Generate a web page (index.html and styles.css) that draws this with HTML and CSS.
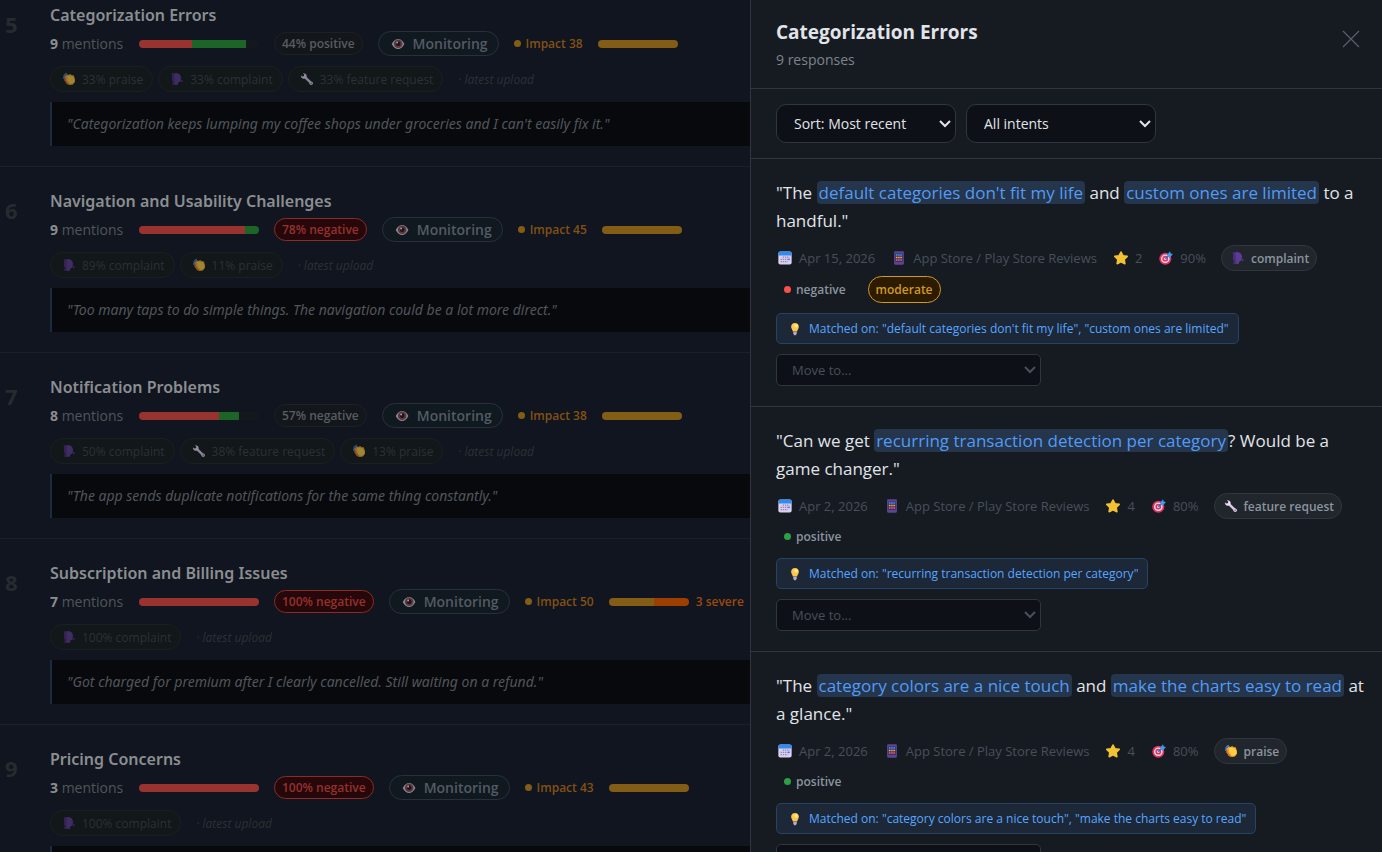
FILE: index.html
```
<!DOCTYPE html>
<html lang="en">
<head>
    <meta charset="UTF-8">
    <meta name="viewport" content="width=device-width, initial-scale=1.0">
    <title>Feedback Themes</title>
    <link rel="stylesheet" href="styles.css">
</head>
<body>
    <!-- Icon set -->
    <svg class="icon-defs" aria-hidden="true">
        <symbol id="i-clap" viewBox="0 0 16 16">
            <path d="M2.600 3.800L4.800 1.800M2 7L2.600 4.600" stroke="#2f7de0" stroke-width="1.800" stroke-linecap="round"/>
            <path d="M3 5.200l2.600-2.600 1.800.8 1.800-1 2.200 1.400 2-.1 1.400 4.100.1 3.200-2.400 3.200-3.400.7-3.400-1.300-2.700-4z" fill="#f0a030"/>
            <path d="M5.800 4.800l2-1.200 2 1.200 2.200-.2 2.200 3.800-.1 2.800-2.400 2.200-3-.4-2.500-3.100z" fill="#ffcf45"/>
            <path d="M3 5.200l-.1 4.600 2.800 3.800 3.200 1.200-3.300-4.200z" fill="#e5702c"/>
        </symbol>
        <symbol id="i-talk" viewBox="0 0 16 16">
            <path d="M2 2L8 1.200l3.400 1.600 1.200 3.400-.4 4.400-2.800 1.600-.6 2.600-6-.4.7-3.200-1.400-2 .6-2z" fill="#5d3a94"/>
            <path d="M2 2l3-.4.6 12.900-2.800-.1.7-3.200-1.400-2 .6-2z" fill="#472c78"/>
            <path d="M13 8.600l1.800 1.600-2 1.800z" fill="#5d3a94"/>
        </symbol>
        <symbol id="i-wrench" viewBox="0 0 16 16">
            <path d="M6 6.200l6.800 6.600" stroke="#d9cbe8" stroke-width="2.800" stroke-linecap="round"/>
            <path d="M3.400 1.400L5 3.200 4.200 4.800 2.400 5 1 3.600C.8 5.600 2.200 7.600 4.400 7.600 6.600 7.600 7.800 6 7.600 4.200 7.400 2.400 5.600 1 3.400 1.400z" fill="#e8ddf2"/>
            <circle cx="12.800" cy="12.800" r="2" fill="#d9cbe8"/>
            <circle cx="12.800" cy="12.800" r=".7" fill="#57506a"/>
        </symbol>
        <symbol id="i-eye" viewBox="0 0 16 16">
            <path d="M.8 8C3 4.200 5.400 2.400 8.200 2.400S13.400 4.200 15.300 8c-2 3.800-4.400 5.700-7.200 5.700S2.800 11.800.8 8z" fill="#dcd0e4"/>
            <circle cx="8.200" cy="7.800" r="4.900" fill="#8f4a4e"/>
            <circle cx="8.200" cy="7.800" r="2.600" fill="#2a1119"/>
            <circle cx="7" cy="6.200" r="1.100" fill="#fff"/>
        </symbol>
        <symbol id="i-cal" viewBox="0 0 16 16">
            <rect x=".4" y=".6" width="15.200" height="14.800" rx="2.200" fill="#dccff0"/>
            <path d="M.4 5V2.800Q.4.6 2.600.6h10.800Q15.600.6 15.600 2.800V5z" fill="#2e8cf0"/>
            <path d="M5.400 7h8M3 9.600h10.400M3 12.200h8" stroke="#8f86b4" stroke-width="1.500" stroke-dasharray="1.600 .9"/>
            <path d="M11.400 9.600h2" stroke="#2e8cf0" stroke-width="1.800"/>
        </symbol>
        <symbol id="i-phone" viewBox="0 0 16 16">
            <rect x="2.400" y=".4" width="11.200" height="15.200" rx="1.200" fill="#5c4694"/>
            <rect x="3.800" y="2.800" width="8.400" height="9.800" fill="#3b2c66"/>
            <path d="M4.500 4.600h7" stroke="#3f9df5" stroke-width="1.800" stroke-dasharray="1.800 .7"/>
            <path d="M4.500 7.400h7" stroke="#ffb02e" stroke-width="1.800" stroke-dasharray="1.800 .7"/>
            <path d="M4.500 10.200h7" stroke="#f06a5a" stroke-width="1.800" stroke-dasharray="1.800 .7"/>
        </symbol>
        <symbol id="i-star" viewBox="0 0 16 16">
            <path d="M8 1.200l2.200 4.200 4.900.7-3.500 3.500.8 4.900L8 12.300l-4.400 2.200.8-4.900L.9 6.100l4.900-.7z" fill="#f2c233" stroke="#f2c233" stroke-width="1.800" stroke-linejoin="round"/>
        </symbol>
        <symbol id="i-target" viewBox="0 0 16 16">
            <circle cx="7.200" cy="8.800" r="6.900" fill="#e2335f"/>
            <circle cx="7.200" cy="8.800" r="4.900" fill="#e9dcee"/>
            <circle cx="7.200" cy="8.800" r="3.300" fill="#e2335f"/>
            <circle cx="7.200" cy="8.800" r="1.500" fill="#e9dcee"/>
            <path d="M7.200 8.800l4-4" stroke="#1f6fc0" stroke-width="1.400"/>
            <path d="M9.600 4L12.600.4l.7 2.400 2.600.6-3 3.400-2.900.2z" fill="#3b9cf0"/>
        </symbol>
        <symbol id="i-bulb" viewBox="0 0 16 16">
            <path d="M8 1.200c2.700 0 4.400 1.900 4.400 4.200 0 2-1.400 3-1.900 5.400h-5C5 8.400 3.600 7.400 3.600 5.400 3.600 3.100 5.300 1.200 8 1.200z" fill="#ffc64a"/>
            <circle cx="9.200" cy="4.400" r="1.900" fill="#fff0a8"/>
            <path d="M6 11.200h4v2.200L8.900 15H7.100L6 13.400z" fill="#b9a7cf"/>
        </symbol>
    </svg>

    <main class="theme-list">
        <article class="theme">
            <div class="rank">5</div>
            <div class="theme-body">
                <h3>Categorization Errors</h3>
                <div class="stats">
                    <span class="mentions"><b>9</b> mentions</span>
                    <span class="bar"><i class="red" style="width: 44%"></i><i class="green" style="width: 45%"></i></span>
                    <span class="badge">44% positive</span>
                    <button type="button" class="status"><svg class="icon"><use href="#i-eye"/></svg>Monitoring</button>
                    <span class="impact">Impact 38</span>
                    <span class="bar small"><i class="amber" style="width: 100%"></i></span>
                </div>
                <div class="intents">
                    <span class="intent"><svg class="icon"><use href="#i-clap"/></svg>33% praise</span>
                    <span class="intent"><svg class="icon"><use href="#i-talk"/></svg>33% complaint</span>
                    <span class="intent"><svg class="icon"><use href="#i-wrench"/></svg>33% feature request</span>
                    <em>· latest upload</em>
                </div>
                <blockquote>"Categorization keeps lumping my coffee shops under groceries and I can't easily fix it."</blockquote>
            </div>
        </article>

        <article class="theme">
            <div class="rank">6</div>
            <div class="theme-body">
                <h3>Navigation and Usability Challenges</h3>
                <div class="stats">
                    <span class="mentions"><b>9</b> mentions</span>
                    <span class="bar"><i class="red" style="width: 88%"></i><i class="green" style="width: 12%"></i></span>
                    <span class="badge bad">78% negative</span>
                    <button type="button" class="status"><svg class="icon"><use href="#i-eye"/></svg>Monitoring</button>
                    <span class="impact">Impact 45</span>
                    <span class="bar small"><i class="amber" style="width: 100%"></i></span>
                </div>
                <div class="intents">
                    <span class="intent"><svg class="icon"><use href="#i-talk"/></svg>89% complaint</span>
                    <span class="intent"><svg class="icon"><use href="#i-clap"/></svg>11% praise</span>
                    <em>· latest upload</em>
                </div>
                <blockquote>"Too many taps to do simple things. The navigation could be a lot more direct."</blockquote>
            </div>
        </article>

        <article class="theme">
            <div class="rank">7</div>
            <div class="theme-body">
                <h3>Notification Problems</h3>
                <div class="stats">
                    <span class="mentions"><b>8</b> mentions</span>
                    <span class="bar"><i class="red" style="width: 67%"></i><i class="green" style="width: 16%"></i></span>
                    <span class="badge">57% negative</span>
                    <button type="button" class="status"><svg class="icon"><use href="#i-eye"/></svg>Monitoring</button>
                    <span class="impact">Impact 38</span>
                    <span class="bar small"><i class="amber" style="width: 100%"></i></span>
                </div>
                <div class="intents">
                    <span class="intent"><svg class="icon"><use href="#i-talk"/></svg>50% complaint</span>
                    <span class="intent"><svg class="icon"><use href="#i-wrench"/></svg>38% feature request</span>
                    <span class="intent"><svg class="icon"><use href="#i-clap"/></svg>13% praise</span>
                    <em>· latest upload</em>
                </div>
                <blockquote>"The app sends duplicate notifications for the same thing constantly."</blockquote>
            </div>
        </article>

        <article class="theme">
            <div class="rank">8</div>
            <div class="theme-body">
                <h3>Subscription and Billing Issues</h3>
                <div class="stats">
                    <span class="mentions"><b>7</b> mentions</span>
                    <span class="bar"><i class="red" style="width: 100%"></i></span>
                    <span class="badge bad">100% negative</span>
                    <button type="button" class="status"><svg class="icon"><use href="#i-eye"/></svg>Monitoring</button>
                    <span class="impact">Impact 50</span>
                    <span class="severity">
                        <span class="bar small"><i class="amber" style="width: 57%"></i><i class="orange" style="width: 43%"></i></span>
                        3 severe
                    </span>
                </div>
                <div class="intents">
                    <span class="intent"><svg class="icon"><use href="#i-talk"/></svg>100% complaint</span>
                    <em>· latest upload</em>
                </div>
                <blockquote>"Got charged for premium after I clearly cancelled. Still waiting on a refund."</blockquote>
            </div>
        </article>

        <article class="theme">
            <div class="rank">9</div>
            <div class="theme-body">
                <h3>Pricing Concerns</h3>
                <div class="stats">
                    <span class="mentions"><b>3</b> mentions</span>
                    <span class="bar"><i class="red" style="width: 100%"></i></span>
                    <span class="badge bad">100% negative</span>
                    <button type="button" class="status"><svg class="icon"><use href="#i-eye"/></svg>Monitoring</button>
                    <span class="impact">Impact 43</span>
                    <span class="bar small"><i class="amber" style="width: 100%"></i></span>
                </div>
                <div class="intents">
                    <span class="intent"><svg class="icon"><use href="#i-talk"/></svg>100% complaint</span>
                    <em>· latest upload</em>
                </div>
                <blockquote></blockquote>
            </div>
        </article>
    </main>

    <aside class="drawer">
        <header class="drawer-header">
            <div>
                <h2>Categorization Errors</h2>
                <p>9 responses</p>
            </div>
            <button type="button" class="close" aria-label="Close">
                <svg viewBox="0 0 18 18"><path d="M1 1l16 16M17 1L1 17"/></svg>
            </button>
        </header>

        <div class="filters">
            <select class="sort" aria-label="Sort responses">
                <option>Sort: Most recent</option>
            </select>
            <select class="intent-filter" aria-label="Filter by intent">
                <option>All intents</option>
            </select>
        </div>

        <section class="response">
            <p class="text">"The <mark>default categories don't fit my life</mark> and <mark>custom ones are limited</mark> to a handful."</p>
            <div class="meta">
                <span class="fact"><svg class="icon"><use href="#i-cal"/></svg>Apr 15, 2026</span>
                <span class="fact"><svg class="icon"><use href="#i-phone"/></svg>App Store / Play Store Reviews</span>
                <span class="fact"><svg class="icon"><use href="#i-star"/></svg>2</span>
                <span class="fact"><svg class="icon"><use href="#i-target"/></svg>90%</span>
                <span class="tag"><svg class="icon"><use href="#i-talk"/></svg>complaint</span>
                <span class="sentiment negative">negative</span>
                <span class="tag moderate">moderate</span>
            </div>
            <div class="matched"><svg class="icon"><use href="#i-bulb"/></svg>Matched on: "default categories don't fit my life", "custom ones are limited"</div>
            <select class="move" aria-label="Move response to theme">
                <option>Move to...</option>
            </select>
        </section>

        <section class="response">
            <p class="text">"Can we get <mark>recurring transaction detection per category</mark>? Would be a game changer."</p>
            <div class="meta">
                <span class="fact"><svg class="icon"><use href="#i-cal"/></svg>Apr 2, 2026</span>
                <span class="fact"><svg class="icon"><use href="#i-phone"/></svg>App Store / Play Store Reviews</span>
                <span class="fact"><svg class="icon"><use href="#i-star"/></svg>4</span>
                <span class="fact"><svg class="icon"><use href="#i-target"/></svg>80%</span>
                <span class="tag"><svg class="icon"><use href="#i-wrench"/></svg>feature request</span>
                <span class="sentiment positive">positive</span>
            </div>
            <div class="matched"><svg class="icon"><use href="#i-bulb"/></svg>Matched on: "recurring transaction detection per category"</div>
            <select class="move" aria-label="Move response to theme">
                <option>Move to...</option>
            </select>
        </section>

        <section class="response">
            <p class="text">"The <mark>category colors are a nice touch</mark> and <mark>make the charts easy to read</mark> at a glance."</p>
            <div class="meta">
                <span class="fact"><svg class="icon"><use href="#i-cal"/></svg>Apr 2, 2026</span>
                <span class="fact"><svg class="icon"><use href="#i-phone"/></svg>App Store / Play Store Reviews</span>
                <span class="fact"><svg class="icon"><use href="#i-star"/></svg>4</span>
                <span class="fact"><svg class="icon"><use href="#i-target"/></svg>80%</span>
                <span class="tag"><svg class="icon"><use href="#i-clap"/></svg>praise</span>
                <span class="sentiment positive">positive</span>
            </div>
            <div class="matched"><svg class="icon"><use href="#i-bulb"/></svg>Matched on: "category colors are a nice touch", "make the charts easy to read"</div>
            <select class="move" aria-label="Move response to theme">
                <option>Move to...</option>
            </select>
        </section>
    </aside>
</body>
</html>
```
FILE: styles.css
```
* {
    box-sizing: border-box;
}

body {
    margin: 0;
    height: 100vh;
    overflow: hidden;
    background: #10151f;
    color: #8b8e91;
    font-family: "Segoe UI", "Open Sans", "Noto Sans", sans-serif;
    font-size: 14px;
}

h2, h3, p, blockquote {
    margin: 0;
}

button, select {
    font-family: inherit;
    cursor: pointer;
}

.icon-defs {
    display: none;
}
.icon {
    width: 14px;
    height: 14px;
    margin: 0 2px;
    flex: none;
}

/* Theme list, dimmed behind the drawer */
.theme-list {
    margin-top: -19px;
}
.theme {
    display: flex;
    padding: 20px 0;
    border-bottom: 1px solid #1b2024;
}
.theme .icon {
    opacity: 0.6;
}
.rank {
    width: 50px;
    flex: none;
    padding: 8px 0 0 5px;
    font-size: 22px;
    font-weight: 700;
    line-height: 30px;
    color: #262b30;
}
.theme-body {
    flex: 1;
}
.theme h3 {
    margin-bottom: 2px;
    font-family: "Segoe UI", "Noto Sans", sans-serif;
    font-size: 16px;
    font-weight: 600;
    line-height: 28px;
}

.stats {
    display: flex;
    align-items: center;
    gap: 15px;
    height: 25px;
    white-space: nowrap;
}
.mentions {
    min-width: 74px;
    color: #50555b;
}
.mentions b {
    color: #8b8e91;
}
.bar {
    display: flex;
    width: 120px;
    height: 8px;
    border-radius: 4px;
    overflow: hidden;
    background: #14181c;
}
.bar.small {
    width: 80px;
}
.bar .red {
    background: #99332f;
}
.bar .green {
    background: #1c6428;
}
.bar .amber {
    background: #835d16;
}
.bar .orange {
    background: #9c3f00;
}
.badge {
    padding: 0 7px;
    border: 1px solid #1c2124;
    border-radius: 12px;
    background: #13171b;
    color: #585d62;
    font-size: 12px;
    font-weight: 600;
    line-height: 21px;
}
.badge.bad {
    border-color: #8c2b29;
    background: #26080b;
    color: #97302d;
}
.status {
    display: flex;
    align-items: center;
    gap: 6px;
    height: 25px;
    padding: 0 10px;
    border: 1px solid #29303a;
    border-radius: 13px;
    background: #101820;
    color: #545b63;
    font-size: 14px;
    font-weight: 600;
}
.impact {
    display: flex;
    align-items: center;
    gap: 5px;
    color: #835114;
    font-size: 12px;
    font-weight: 600;
}
.impact::before {
    content: "";
    width: 7px;
    height: 7px;
    border-radius: 50%;
    background: #835d16;
}
.severity {
    display: flex;
    align-items: center;
    gap: 7px;
    color: #9c4a0c;
    font-size: 12px;
    font-weight: 600;
}

.intents {
    display: flex;
    align-items: center;
    gap: 5px;
    margin: 10px 0;
    color: #2c3136;
    font-size: 12px;
}
.intent {
    display: flex;
    align-items: center;
    gap: 4px;
    height: 26px;
    padding: 0 9px;
    border: 1px solid #1a1f22;
    border-radius: 13px;
    background: #12171a;
}
.intents em {
    margin-left: 10px;
}
.theme blockquote {
    min-height: 44px;
    padding: 0 15px;
    border-left: 2px solid #1b2c42;
    background: #08090c;
    color: #50555b;
    font-family: "Segoe UI", "Noto Sans", sans-serif;
    font-size: 14px;
    font-style: italic;
    line-height: 44px;
}

/* Drawer */
.drawer {
    position: fixed;
    top: 0;
    right: 0;
    bottom: 0;
    width: min(632px, 100%);
    overflow: hidden;
    border-left: 1px solid #30363d;
    background: #161b22;
    color: #e1e4e8;
}
.drawer-header {
    display: flex;
    justify-content: space-between;
    align-items: flex-start;
    padding: 18px 22px 15px 25px;
    border-bottom: 1px solid #30363d;
}
.drawer-header h2 {
    font-size: 19px;
    font-weight: 700;
    line-height: 28px;
}
.drawer-header p {
    color: #7d838b;
    font-size: 14px;
    line-height: 27px;
}
.close {
    margin-top: 12px;
    padding: 0;
    border: 0;
    background: none;
}
.close svg {
    display: block;
    width: 18px;
    height: 18px;
    stroke: #596069;
    stroke-width: 1.2;
}

.filters {
    display: flex;
    gap: 10px;
    padding: 15px 25px;
    border-bottom: 1px solid #30363d;
}
select {
    appearance: none;
    border: 1px solid #30363d;
    background: #0d1117 url("data:image/svg+xml,%3Csvg xmlns='http://www.w3.org/2000/svg' width='12' height='8'%3E%3Cpath d='M1 1l5 5 5-5' fill='none' stroke='%23e1e4e8' stroke-width='2'/%3E%3C/svg%3E") no-repeat right 4px center;
    color: #e1e4e8;
    font-size: 14px;
}
.filters select {
    height: 39px;
    padding: 0 17px;
    border-radius: 10px;
}
.sort {
    width: 180px;
}
.intent-filter {
    width: 190px;
}

.response {
    padding: 20px 16px 20px 25px;
    border-bottom: 1px solid #30363d;
}
.text {
    font-size: 17px;
    line-height: 28px;
}
mark {
    padding: 0 2px;
    border-radius: 4px;
    background: #24354c;
    color: #539bf5;
}
.meta {
    display: flex;
    flex-wrap: wrap;
    align-items: center;
    gap: 5px 15px;
    margin: 10px 0;
    color: #484f58;
    font-size: 13px;
}
.fact {
    display: flex;
    align-items: center;
    gap: 5px;
}
.tag {
    display: flex;
    align-items: center;
    gap: 4px;
    height: 26px;
    padding: 0 7px;
    border: 1px solid #30363d;
    border-radius: 14px;
    background: #21262d;
    color: #8b949e;
    font-size: 12px;
    font-weight: 600;
}
.tag.moderate {
    height: 27px;
    border-color: #d29922;
    background: #2d1b00;
    color: #d29922;
}
.sentiment {
    display: flex;
    align-items: center;
    gap: 5px;
    height: 24px;
    padding: 0 7px 0 8px;
    color: #8b949e;
    font-size: 12px;
    font-weight: 600;
}
.sentiment::before {
    content: "";
    width: 7px;
    height: 7px;
    border-radius: 50%;
}
.negative::before {
    background: #f85149;
}
.positive::before {
    background: #2ea043;
}
.matched {
    display: flex;
    align-items: center;
    gap: 5px;
    width: fit-content;
    height: 31px;
    padding: 0 9px;
    border: 1px solid #264264;
    border-radius: 5px;
    background: #1c2737;
    color: #58a6ff;
    font-size: 12px;
}
.move {
    display: block;
    width: 265px;
    height: 32px;
    margin-top: 10px;
    padding: 0 15px;
    border-radius: 5px;
    background-image: url("data:image/svg+xml,%3Csvg xmlns='http://www.w3.org/2000/svg' width='12' height='8'%3E%3Cpath d='M1 1l5 5 5-5' fill='none' stroke='%23484f58' stroke-width='2'/%3E%3C/svg%3E");
    color: #484f58;
    font-size: 13px;
}
```
